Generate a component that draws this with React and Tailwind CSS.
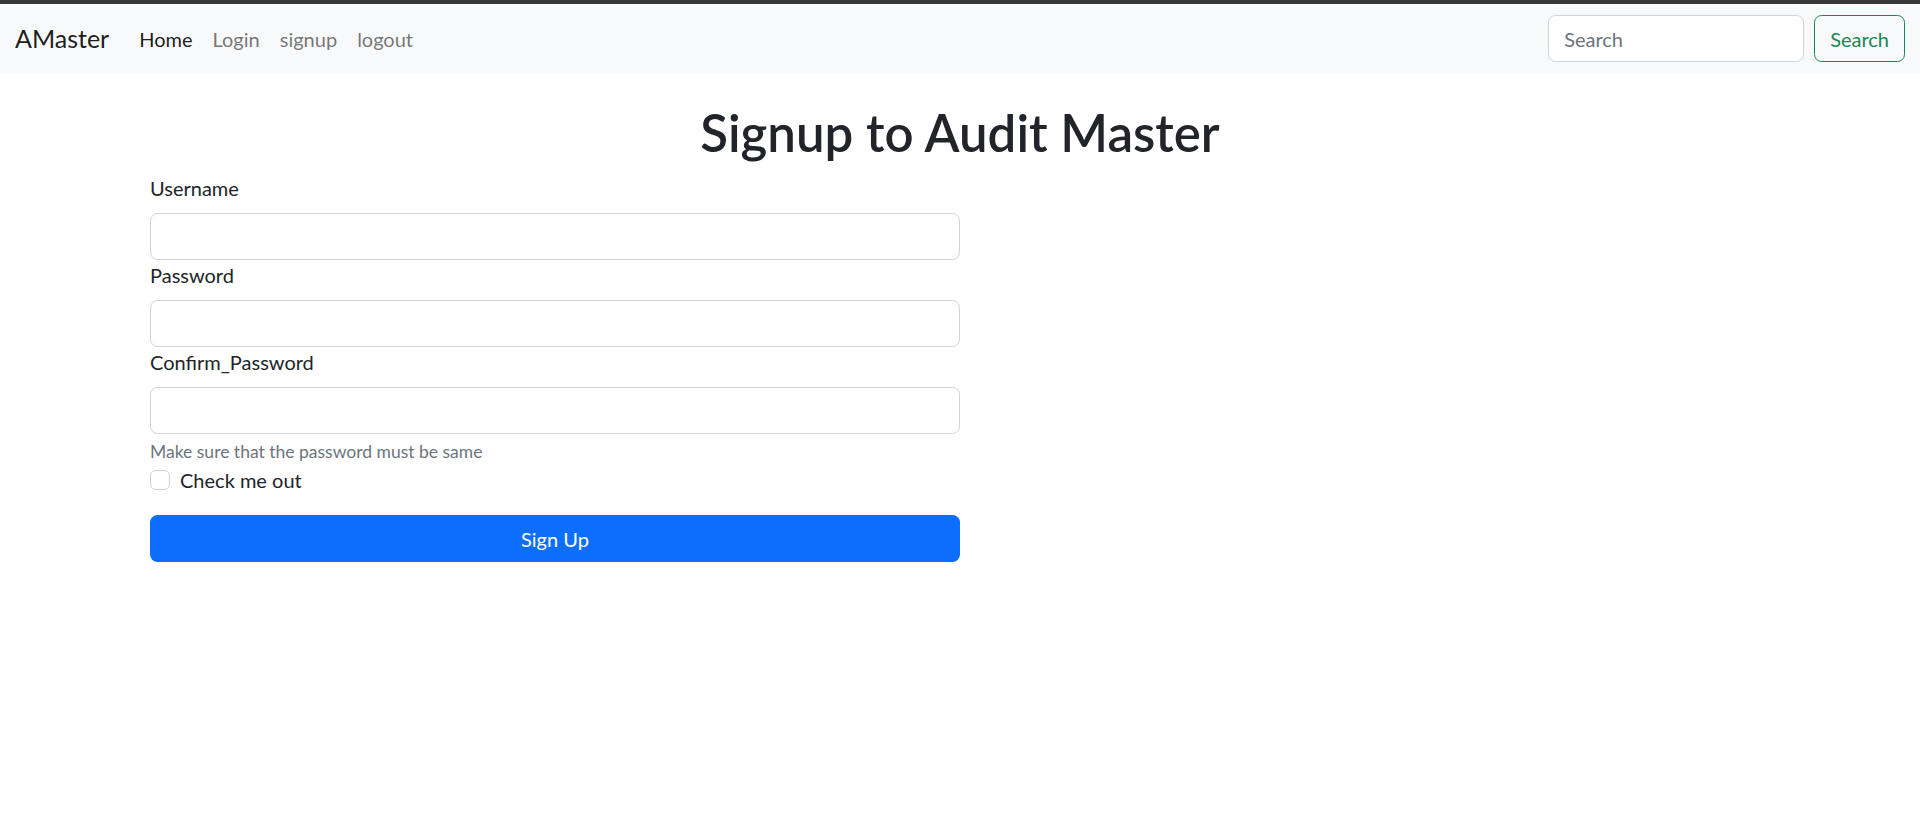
import React from 'react';

const Field = ({ label, type = 'text' }) => (
    <div>
        <label className="block text-[20px] leading-[30px] mb-[10px] text-[#212529]">{label}</label>
        <input
            type={type}
            className="block w-full h-[47px] px-[15px] bg-white border border-[#ced4da] rounded-[7.5px] text-[20px] outline-none"
        />
    </div>
);

const App = () => {
    return (
        <div className="min-h-screen bg-white text-[#212529] font-[Lato,_'Noto_Sans',_sans-serif]">
            <div className="h-[4px] bg-[#383838]" />

            {/* Navbar */}
            <nav className="h-[69px] bg-[#f8f9fa] px-[15px] flex items-center justify-between">
                <div className="flex items-center">
                    <a className="text-[25px] leading-[37px] text-black/90 mr-[20px]">AMaster</a>
                    <ul className="flex items-center text-[20px] leading-[30px]">
                        <li><a className="px-[10px] text-black/90">Home</a></li>
                        <li><a className="px-[10px] text-black/55">Login</a></li>
                        <li><a className="px-[10px] text-black/55">signup</a></li>
                        <li><a className="px-[10px] text-black/55">logout</a></li>
                    </ul>
                </div>
                <form className="flex items-center" onSubmit={e => e.preventDefault()}>
                    <input
                        type="search"
                        placeholder="Search"
                        className="w-[256px] h-[47px] px-[15px] mr-[10px] bg-white border border-[#ced4da] rounded-[7.5px] text-[20px] placeholder:text-[#6c757d] outline-none"
                    />
                    <button className="h-[47px] px-[15px] border border-[#198754] rounded-[7.5px] text-[20px] text-[#198754]">
                        Search
                    </button>
                </form>
            </nav>

            {/* Page */}
            <div className="w-[1650px] mx-auto px-[15px]">
                <h1 className="text-center text-[51px] leading-[60px] font-semibold mt-[30px] mb-[10px]">Signup to Audit Master</h1>
                <form className="w-1/2" onSubmit={e => e.preventDefault()}>
                    <Field label="Username" />
                    <Field label="Password" type="password" />
                    <Field label="Confirm_Password" type="password" />
                    <div className="mt-[5px] text-[17.5px] leading-[26px] text-[#6c757d]">Make sure that the password must be same</div>
                    <div className="flex items-start min-h-[30px] mb-[20px]">
                        <input
                            type="checkbox"
                            className="appearance-none w-[20px] h-[20px] mt-[5px] border border-[#ced4da] rounded-[5px] bg-white"
                        />
                        <label className="ml-[10px] text-[20px] leading-[30px]">Check me out</label>
                    </div>
                    <button className="w-full h-[47px] bg-[#0d6efd] rounded-[7.5px] text-white text-[20px]">Sign Up</button>
                </form>
            </div>
        </div>
    );
};

export default App;
